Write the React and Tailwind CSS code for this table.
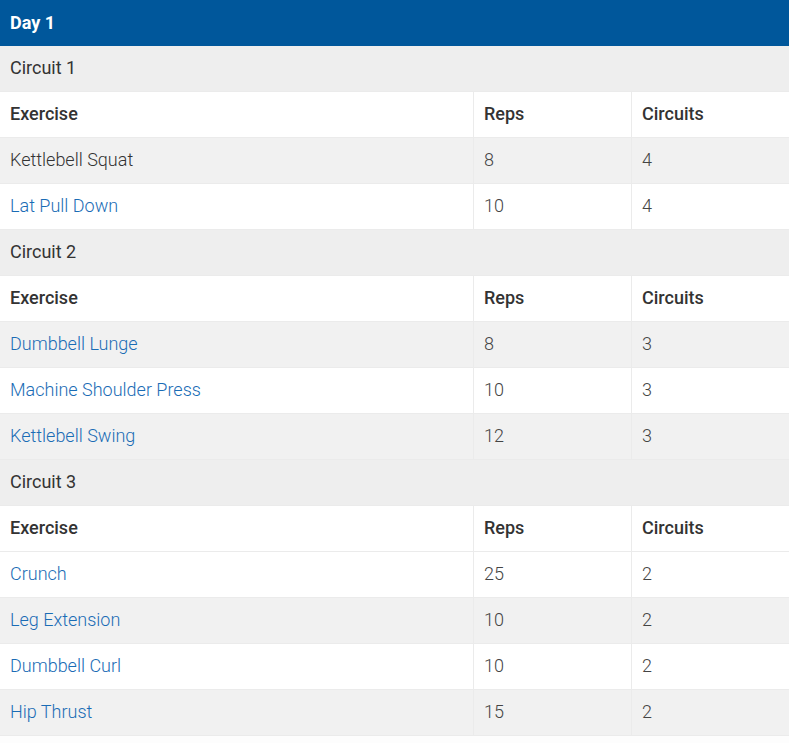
import React from 'react';

const circuits = [
  {
    name: 'Circuit 1',
    rows: [
      { ex: 'Kettlebell Squat', reps: 8, sets: 4, link: false },
      { ex: 'Lat Pull Down', reps: 10, sets: 4, link: true },
    ],
  },
  {
    name: 'Circuit 2',
    rows: [
      { ex: 'Dumbbell Lunge', reps: 8, sets: 3, link: true },
      { ex: 'Machine Shoulder Press', reps: 10, sets: 3, link: true },
      { ex: 'Kettlebell Swing', reps: 12, sets: 3, link: true },
    ],
  },
  {
    name: 'Circuit 3',
    rows: [
      { ex: 'Crunch', reps: 25, sets: 2, link: true },
      { ex: 'Leg Extension', reps: 10, sets: 2, link: true },
      { ex: 'Dumbbell Curl', reps: 10, sets: 2, link: true },
      { ex: 'Hip Thrust', reps: 15, sets: 2, link: true },
    ],
  },
];

// flatten so the striping follows the table's overall row index
const rows = [];
circuits.forEach((c) => {
  rows.push({ type: 'circuit', name: c.name });
  rows.push({ type: 'head' });
  c.rows.forEach((r) => rows.push({ type: 'data', ...r }));
});

const Row = ({ cells, bg, head }) => (
  <div className={`grid grid-cols-[473px_158px_158px] h-[46px] border-b border-[#ebebeb] ${bg}`}>
    {cells.map((c, i) => (
      <div
        key={i}
        className={`flex items-center pl-[10px] pb-[2px] ${i > 0 ? 'border-l border-[#ebebeb]' : ''} ${head ? 'font-medium text-[#333]' : 'font-light'}`}
      >
        {c}
      </div>
    ))}
  </div>
);

export default function App() {
  return (
    <div className="w-[789px] min-h-[743px] bg-[#fdfdfd] text-[18px] text-[#333]" style={{ fontFamily: 'Roboto, "Liberation Sans", sans-serif' }}>
      <div className="h-[46px] bg-[#00579b] flex items-center pl-[10px] pb-[2px] text-white font-bold text-[18px]">
        Day 1
      </div>
      {rows.map((r, idx) => {
        if (r.type === 'circuit') {
          return (
            <div key={idx} className="h-[46px] bg-[#eeeeee] flex items-center pl-[10px] pb-[2px] border-b border-[#ebebeb]">
              {r.name}
            </div>
          );
        }
        if (r.type === 'head') {
          return <Row key={idx} head bg="bg-white" cells={['Exercise', 'Reps', 'Circuits']} />;
        }
        return (
          <Row
            key={idx}
            bg={idx % 2 === 0 ? 'bg-[#f1f1f1]' : 'bg-white'}
            cells={[
              <span className={r.link ? 'text-[#1a6cb5]' : 'text-[#333]'}>{r.ex}</span>,
              <span className="text-[#444]">{r.reps}</span>,
              <span className="text-[#444]">{r.sets}</span>,
            ]}
          />
        );
      })}
    </div>
  );
}
